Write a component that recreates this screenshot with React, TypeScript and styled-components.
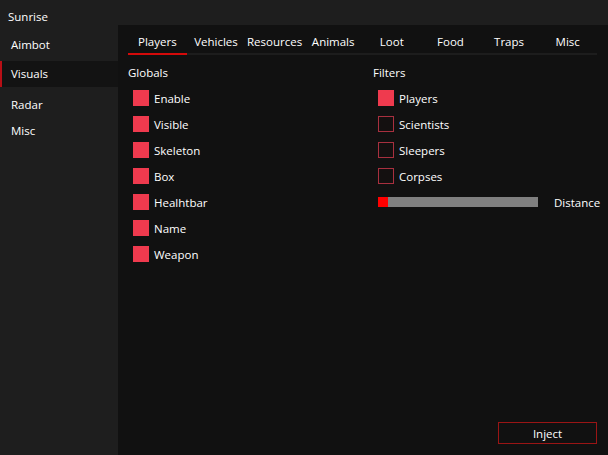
import React, { useState } from "react";
import styled, { createGlobalStyle } from "styled-components";

const GlobalStyle = createGlobalStyle`
  html, body {
    margin: 0;
    padding: 0;
    background: #1e1e1e;
  }
  body {
    font-family: "Open Sans", "Noto Sans", sans-serif;
    font-size: 11.5px;
    color: #ffffff;
  }
`;

const tabs = [
  "Players",
  "Vehicles",
  "Resources",
  "Animals",
  "Loot",
  "Food",
  "Traps",
  "Misc",
];

const navItems = ["Aimbot", "Visuals", "Radar", "Misc"];

const globals = [
  "Enable",
  "Visible",
  "Skeleton",
  "Box",
  "Healhtbar",
  "Name",
  "Weapon",
];

function App() {
  const [nav, setNav] = useState("Visuals");
  const [tab, setTab] = useState("Players");
  const [filters, setFilters] = useState<Record<string, boolean>>({
    Players: true,
    Scientists: false,
    Sleepers: false,
    Corpses: false,
  });
  const [globalsOn, setGlobalsOn] = useState<Record<string, boolean>>(
    Object.fromEntries(globals.map((g) => [g, true]))
  );
  const distance = 6;

  return (
    <>
      <GlobalStyle />
      <StWindow>
        <StTitleBar>Sunrise</StTitleBar>
        <StBody>
          <StSidebar>
            {navItems.map((item) => (
              <StNavItem
                key={item}
                $active={item === nav}
                onClick={() => setNav(item)}
              >
                {item}
              </StNavItem>
            ))}
          </StSidebar>
          <StContent>
            <StTabs>
              {tabs.map((t) => (
                <StTab key={t} $active={t === tab} onClick={() => setTab(t)}>
                  {t}
                </StTab>
              ))}
            </StTabs>
            <StColumns>
              <StColumn>
                <StHeading>Globals</StHeading>
                {globals.map((g) => (
                  <StRow
                    key={g}
                    onClick={() =>
                      setGlobalsOn({ ...globalsOn, [g]: !globalsOn[g] })
                    }
                  >
                    <StBox $checked={globalsOn[g]} />
                    {g}
                  </StRow>
                ))}
              </StColumn>
              <StColumn>
                <StHeading>Filters</StHeading>
                {Object.keys(filters).map((f) => (
                  <StRow
                    key={f}
                    onClick={() => setFilters({ ...filters, [f]: !filters[f] })}
                  >
                    <StBox $checked={filters[f]} />
                    {f}
                  </StRow>
                ))}
                <StSliderRow>
                  <StTrack>
                    <StFill style={{ width: `${distance}%` }} />
                  </StTrack>
                  Distance
                </StSliderRow>
              </StColumn>
            </StColumns>
            <StFooter>
              <StInjectBtn type="button">Inject</StInjectBtn>
            </StFooter>
          </StContent>
        </StBody>
      </StWindow>
    </>
  );
}

export default App;

const StWindow = styled.div`
  width: 608px;
  height: 455px;
  display: flex;
  flex-direction: column;
  background: #1e1e1e;
  overflow: hidden;
`;

const StTitleBar = styled.div`
  height: 25px;
  box-sizing: border-box;
  padding: 9px 8px 0;
  line-height: 16px;
  flex-shrink: 0;
  background: #1e1e1e;
`;

const StBody = styled.div`
  flex: 1;
  display: flex;
  min-height: 0;
`;

const StSidebar = styled.div`
  width: 118px;
  flex-shrink: 0;
  display: flex;
  flex-direction: column;
  padding-top: 7px;
  background: #1e1e1e;
`;

const StNavItem = styled.div<{ $active: boolean }>`
  height: 26px;
  line-height: 26px;
  padding-left: 11px;
  cursor: pointer;
  margin: ${(p) => (p.$active ? "3px 0 5px" : "0")};
  background: ${(p) => (p.$active ? "#131313" : "transparent")};
  box-shadow: ${(p) => (p.$active ? "inset 2px 0 0 #b80f16" : "none")};
`;

const StContent = styled.div`
  flex: 1;
  min-width: 0;
  display: flex;
  flex-direction: column;
  padding: 4px 11px 11px 10px;
  background: #111111;
`;

const StTabs = styled.div`
  display: grid;
  grid-template-columns: repeat(8, 1fr);
  height: 24px;
  border-bottom: 2px solid #1d1d1d;
`;

const StTab = styled.div<{ $active: boolean }>`
  display: flex;
  justify-content: center;
  align-items: center;
  margin-bottom: -2px;
  cursor: pointer;
  border-bottom: 2px solid ${(p) => (p.$active ? "#d40a0a" : "transparent")};
`;

const StColumns = styled.div`
  display: grid;
  grid-template-columns: 245px minmax(0, 1fr);
  margin-top: 8px;
`;

const StColumn = styled.div`
  display: flex;
  flex-direction: column;
`;

const StHeading = styled.div`
  height: 20px;
  line-height: 20px;
  margin-bottom: 2px;
`;

const StRow = styled.div`
  height: 26px;
  display: flex;
  align-items: center;
  gap: 5px;
  padding-left: 5px;
  cursor: pointer;
`;

const StBox = styled.span<{ $checked: boolean }>`
  width: 16px;
  height: 16px;
  box-sizing: border-box;
  flex-shrink: 0;
  background: ${(p) => (p.$checked ? "#ef3a4e" : "#141010")};
  border: 1px solid ${(p) => (p.$checked ? "#ef3a4e" : "#a8303f")};
`;

const StSliderRow = styled.div`
  height: 26px;
  display: flex;
  align-items: center;
  gap: 16px;
  padding-left: 5px;
  white-space: nowrap;
`;

const StTrack = styled.div`
  width: 160px;
  height: 10px;
  flex-shrink: 0;
  background: #808080;
  display: flex;
`;

const StFill = styled.div`
  height: 100%;
  background: #ff0000;
`;

const StFooter = styled.div`
  margin-top: auto;
  display: flex;
  justify-content: flex-end;
`;

const StInjectBtn = styled.button`
  width: 99px;
  height: 22px;
  padding: 0;
  font-family: inherit;
  font-size: 11.5px;
  color: #ffffff;
  background: #111111;
  border: 1px solid #9a1515;
  cursor: pointer;
`;
